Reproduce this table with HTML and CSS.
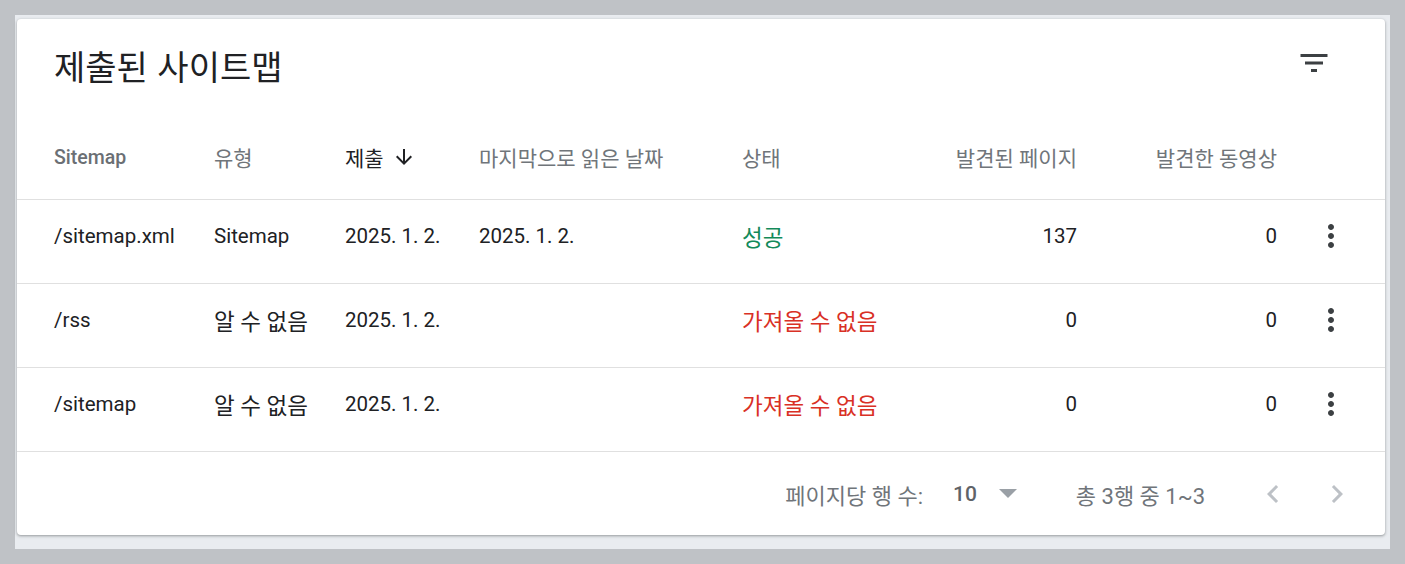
FILE: index.html
```html
<!DOCTYPE html>
<html lang="ko">
  <head>
    <meta charset="utf-8" />
    <title>제출된 사이트맵</title>
    <link rel="stylesheet" href="styles.css">
  </head>

  <body>
    <!-- 바깥 틀 -->
    <div class="frame">
      <div class="card">
        <!-- 제목 -->
        <div class="card-head">
          <h1>제출된 사이트맵</h1>
          <button class="icon-btn filter" title="필터">
            <svg viewBox="0 0 24 24" width="36" height="36"><path d="M10 18h4v-2h-4v2zM3 6v2h18V6H3zm3 7h12v-2H6v2z"/></svg>
          </button>
        </div>

        <!-- 표 머리 -->
        <div class="row head-row">
          <div class="th strong">Sitemap</div>
          <div class="th">유형</div>
          <div class="th sorted">제출
            <svg viewBox="0 0 24 24" width="24" height="24"><path d="M20 12l-1.41-1.41L13 16.17V4h-2v12.17l-5.58-5.59L4 12l8 8 8-8z"/></svg>
          </div>
          <div class="th">마지막으로 읽은 날짜</div>
          <div class="th">상태</div>
          <div class="th num">발견된 페이지</div>
          <div class="th num">발견한 동영상</div>
          <div class="th"></div>
        </div>

        <!-- 표 내용 -->
        <div class="row">
          <div class="td">/sitemap.xml</div>
          <div class="td">Sitemap</div>
          <div class="td">2025. 1. 2.</div>
          <div class="td">2025. 1. 2.</div>
          <div class="td ko ok">성공</div>
          <div class="td num">137</div>
          <div class="td num">0</div>
          <div class="td more">
            <svg viewBox="0 0 24 24" width="36" height="36"><path d="M12 8c1.1 0 2-.9 2-2s-.9-2-2-2-2 .9-2 2 .9 2 2 2zm0 2c-1.1 0-2 .9-2 2s.9 2 2 2 2-.9 2-2-.9-2-2-2zm0 6c-1.1 0-2 .9-2 2s.9 2 2 2 2-.9 2-2-.9-2-2-2z"/></svg>
          </div>
        </div>
        <div class="row">
          <div class="td">/rss</div>
          <div class="td ko">알 수 없음</div>
          <div class="td">2025. 1. 2.</div>
          <div class="td"></div>
          <div class="td ko err">가져올 수 없음</div>
          <div class="td num">0</div>
          <div class="td num">0</div>
          <div class="td more">
            <svg viewBox="0 0 24 24" width="36" height="36"><path d="M12 8c1.1 0 2-.9 2-2s-.9-2-2-2-2 .9-2 2 .9 2 2 2zm0 2c-1.1 0-2 .9-2 2s.9 2 2 2 2-.9 2-2-.9-2-2-2zm0 6c-1.1 0-2 .9-2 2s.9 2 2 2 2-.9 2-2-.9-2-2-2z"/></svg>
          </div>
        </div>
        <div class="row">
          <div class="td">/sitemap</div>
          <div class="td ko">알 수 없음</div>
          <div class="td">2025. 1. 2.</div>
          <div class="td"></div>
          <div class="td ko err">가져올 수 없음</div>
          <div class="td num">0</div>
          <div class="td num">0</div>
          <div class="td more">
            <svg viewBox="0 0 24 24" width="36" height="36"><path d="M12 8c1.1 0 2-.9 2-2s-.9-2-2-2-2 .9-2 2 .9 2 2 2zm0 2c-1.1 0-2 .9-2 2s.9 2 2 2 2-.9 2-2-.9-2-2-2zm0 6c-1.1 0-2 .9-2 2s.9 2 2 2 2-.9 2-2-.9-2-2-2z"/></svg>
          </div>
        </div>

        <!-- 페이지 이동 -->
        <div class="pager">
          <span class="pager-label">페이지당 행 수:</span>
          <span class="pager-size">10</span>
          <svg class="drop" viewBox="7 10 10 5" width="18" height="9"><path d="M7 10l5 5 5-5z"/></svg>
          <span class="pager-range">총 3행 중 1~3</span>
          <svg class="chev" viewBox="0 0 24 24" width="36" height="36"><path d="M15.41 7.41L14 6l-6 6 6 6 1.41-1.41L10.83 12z"/></svg>
          <svg class="chev" viewBox="0 0 24 24" width="36" height="36"><path d="M10 6L8.59 7.41 13.17 12l-4.58 4.59L10 18l6-6z"/></svg>
        </div>
      </div>
    </div>
  </body>
</html>
```

FILE: styles.css
```css
/* 기본 */
html,
body {
  margin: 0;
  padding: 0;
  background-color: #bfc2c6;
  font-family: Roboto, "Noto Sans CJK KR", sans-serif;
  color: #202124;
}

.frame {
  margin: 15px;
  padding: 4px 5px 14px 2px;
  background-color: #e9ecf0;
}

.card {
  height: 516px;
  background: #fff;
  border-radius: 4px;
  box-shadow: 0 1px 2px rgba(60, 64, 67, 0.3), 0 1px 3px 1px rgba(60, 64, 67, 0.15);
  overflow: hidden;
}

/* 제목 줄 */
.card-head {
  height: 94px;
  display: flex;
  align-items: center;
  justify-content: space-between;
  padding: 0 53px 0 37px;
}

h1 {
  margin: 0;
  font-family: "Noto Sans CJK KR", sans-serif;
  font-size: 34px;
  font-weight: 400;
  line-height: 40px;
  color: #202124;
}

.icon-btn {
  padding: 0;
  border: none;
  background: none;
  cursor: pointer;
  fill: #3c4043;
}
.filter {
  display: block;
  margin-bottom: 6px;
}
.filter svg {
  display: block;
}

/* 표 */
.row {
  display: grid;
  grid-template-columns: 160px 131px 134px 263px 135px 200px 200px 72px;
  align-items: center;
  height: 84px;
  padding: 0 36px 12px 37px;
  box-sizing: border-box;
  border-bottom: 1px solid #e0e0e0;
  font-size: 20.5px;
}

.head-row {
  height: 87px;
  padding-top: 2px;
  padding-bottom: 0;
  font-size: 21px;
}

.th {
  color: #70757a;
  display: flex;
  align-items: center;
}
.th.strong {
  font-weight: 500;
  font-size: 19.5px;
  color: #6b6f74;
}
.th.sorted {
  color: #202124;
  gap: 8px;
  fill: #202124;
}
.th.num {
  justify-content: flex-end;
}

.td {
  white-space: nowrap;
}
.td.ko {
  font-size: 22.5px;
}
.td.num {
  text-align: right;
}
.ok {
  color: #138a5a;
}
.err {
  color: #d93025;
}
.more {
  display: flex;
  justify-content: flex-end;
  fill: #3c4043;
}
.more svg {
  display: block;
}

/* 페이지 이동 */
.pager {
  height: 83px;
  display: flex;
  align-items: center;
  justify-content: flex-end;
  padding-right: 30px;
  font-size: 22px;
  color: #70757a;
}
.pager-size {
  margin-left: 30px;
  font-size: 21px;
  font-weight: 500;
  color: #5f6368;
}
.drop {
  margin-left: 22px;
  fill: #9aa0a6;
}
.pager-range {
  margin-left: 59px;
  margin-right: 50px;
}
.chev {
  fill: #bdc1c6;
}
.chev + .chev {
  margin-left: 28px;
}
```
